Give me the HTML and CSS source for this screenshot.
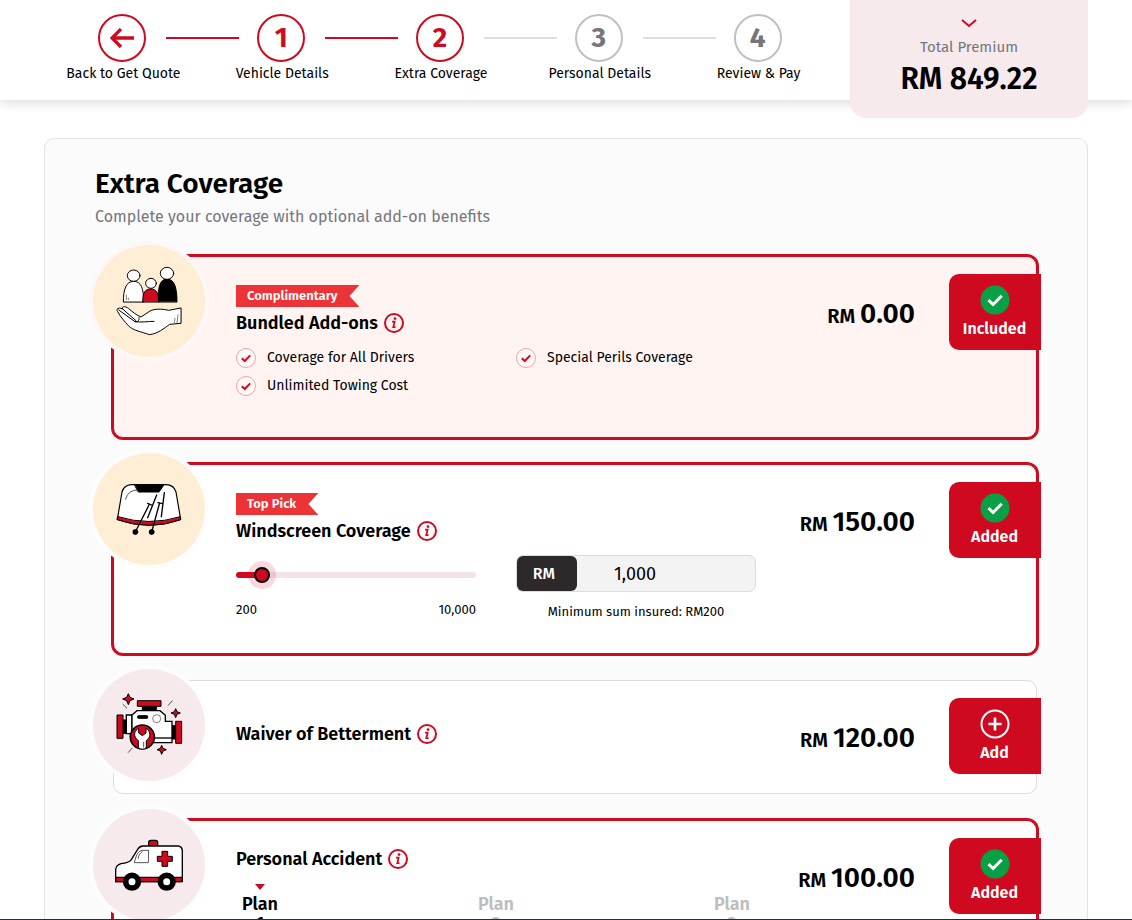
FILE: index.html
```html
<!DOCTYPE html>
<html lang="en">
<head>
    <meta charset="UTF-8">
    <meta name="viewport" content="width=device-width, initial-scale=1.0">
    <title>Extra Coverage</title>
    <link rel="stylesheet" href="styles.css">
</head>
<body>
    <!-- shared icons -->
    <svg class="sprite" aria-hidden="true">
        <symbol id="info" viewBox="0 0 20 20">
            <circle cx="10" cy="10" r="9" fill="none" stroke="#cf0a20" stroke-width="2"/>
            <circle cx="11" cy="5.6" r="1.4" fill="#cf0a20"/>
            <path d="M8 8.6h2.6L9.3 14.2h2.2" fill="none" stroke="#cf0a20" stroke-width="1.8"/>
        </symbol>
        <symbol id="tick" viewBox="0 0 20 20">
            <circle cx="10" cy="10" r="9.5" fill="#fff8f7" stroke="#f3a3a8"/>
            <path d="M5.8 10.2l3 2.8 5.4-5.6" fill="none" stroke="#cf0a20" stroke-width="2"/>
        </symbol>
        <symbol id="added" viewBox="0 0 30 30">
            <circle cx="15" cy="15" r="14.5" fill="#07a045"/>
            <path d="M8.5 15.2l4.6 4.3 8.6-8.8" fill="none" stroke="#fff" stroke-width="3"/>
        </symbol>
        <symbol id="plus" viewBox="0 0 30 30">
            <circle cx="15" cy="15" r="13.5" fill="none" stroke="#fff" stroke-width="2"/>
            <path d="M15 8.500v13M8.500 15h13" stroke="#fff" stroke-width="2.600"/>
        </symbol>
    </svg>

    <div class="page">
        <header class="top-bar">
            <ol class="steps">
                <li class="step done">
                    <a href="#">
                        <span class="step-line"><span class="step-circle">
                            <svg width="24" height="20" viewBox="0 0 24 20"><path d="M24 10H2M11 1L2 10l9 9" fill="none" stroke="#cf0a20" stroke-width="3.300"/></svg>
                        </span></span>
                        Back to Get Quote
                    </a>
                </li>
                <li class="step done"><span class="step-line"><span class="step-circle">1</span></span>Vehicle Details</li>
                <li class="step current"><span class="step-line"><span class="step-circle">2</span></span>Extra Coverage</li>
                <li class="step"><span class="step-line"><span class="step-circle">3</span></span>Personal Details</li>
                <li class="step"><span class="step-line"><span class="step-circle">4</span></span>Review &amp; Pay</li>
            </ol>
            <button class="premium" type="button">
                <svg width="18" height="10" viewBox="0 0 18 10"><path d="M2 2l7 6 7-6" fill="none" stroke="#cf0a20" stroke-width="2"/></svg>
                <span class="premium-label">Total Premium</span>
                <strong class="premium-total">RM 849.22</strong>
            </button>
        </header>

        <main class="panel">
            <h1>Extra Coverage</h1>
            <p class="intro">Complete your coverage with optional add-on benefits</p>

            <div class="cards">
                <section class="card selected tinted">
                    <div class="card-icon cream">
                        <svg viewBox="9 15 336 336" stroke="#000" stroke-width="3" stroke-linejoin="round" stroke-linecap="round">
                            <path d="M100 185c0-36 8-61 31-61s30 22 30 61z" fill="#fff"/>
                            <path d="M204 185c0-40 4-68 27-68s30 28 30 68z" fill="#000"/>
                            <path d="M158 185c0-26 7-38 24-38s24 12 24 38z" fill="#cf0a20"/>
                            <ellipse cx="131" cy="107" rx="19" ry="17" fill="#fff"/>
                            <ellipse cx="231" cy="100" rx="20" ry="18" fill="#fff"/>
                            <ellipse cx="183" cy="130" rx="16" ry="15" fill="#fff"/>
                            <path d="M109 165v14M115 174v5" stroke-width="1.500"/>
                            <path d="M272 204l-36 7c-22-5-42-5-56 2l-27 18c-12-4-27-17-38-26-12-9-22-4-17 2-10-6-22-1-15 8 9 17 20 28 32 42 16 16 40 18 63 27 26-3 44-19 61-31l33-3z" fill="#fff"/>
                            <path d="M98 207l40 35M86 210l49 35c10 2 13-4 12-12M135 245c20 3 38-1 57-1" fill="none"/>
                            <path d="M264 224l-3 25M255 235l-2 12" stroke-width="1.500"/>
                        </svg>
                    </div>
                    <div class="card-body">
                        <span class="ribbon">Complimentary</span>
                        <h2>Bundled Add-ons <svg class="info"><use href="#info"/></svg></h2>
                        <ul class="benefits">
                            <li><svg><use href="#tick"/></svg>Coverage for All Drivers</li>
                            <li><svg><use href="#tick"/></svg>Special Perils Coverage</li>
                            <li><svg><use href="#tick"/></svg>Unlimited Towing Cost</li>
                        </ul>
                    </div>
                    <p class="price"><small>RM</small> 0.00</p>
                    <button class="toggle" type="button"><svg><use href="#added"/></svg>Included</button>
                </section>

                <section class="card selected">
                    <div class="card-icon cream">
                        <svg viewBox="39 39 336 336" stroke="#000" stroke-linejoin="round" stroke-linecap="round">
                            <path d="M112 238l14-82q5-19 26-22h106q24 1 30 22l14 82q-95 34-190 0z" fill="#fff" stroke-width="3.500"/>
                            <path d="M114 230q93 29 187 0l1 9q-95 34-190 0z" fill="#cf0a20" stroke-width="3"/>
                            <path d="M165 136h86l-14 20h-61z" stroke-width="3"/>
                            <path d="M137 178c4-17 15-27 34-28" fill="none" stroke-width="2"/>
                            <path d="M166 276l41-81M230 165l-27 68M203 190l12 5M215 276l23-84M253 158l-9 72M234 188l13 3" fill="none" stroke-width="4"/>
                            <circle cx="166" cy="276" r="8"/>
                            <circle cx="215" cy="276" r="8"/>
                        </svg>
                    </div>
                    <div class="card-body">
                        <span class="ribbon">Top Pick</span>
                        <h2>Windscreen Coverage <svg class="info"><use href="#info"/></svg></h2>
                        <div class="sum">
                            <div class="slider">
                                <input type="range" min="200" max="10000" step="100" value="1000" aria-label="Sum insured" style="--fill: 11%">
                                <div class="slider-ends"><span>200</span><span>10,000</span></div>
                            </div>
                            <div class="amount">
                                <div class="amount-box">
                                    <label for="sum">RM</label>
                                    <input id="sum" type="text" value="1,000">
                                </div>
                                <p>Minimum sum insured: RM200</p>
                            </div>
                        </div>
                    </div>
                    <p class="price"><small>RM</small> 150.00</p>
                    <button class="toggle" type="button"><svg><use href="#added"/></svg>Added</button>
                </section>

                <section class="card single">
                    <div class="card-icon">
                        <svg viewBox="9 12 336 336" stroke="#000" stroke-width="3">
                            <path d="M157 124h42v16h-42zM98 165h13v40H98zM245 182h12v40h-12z" fill="#000"/>
                            <path d="M142 107h71v17h-71zM81 150h18v70H81zM257 169h18v66h-18z" fill="#cf0a20"/>
                            <path d="M109 150h17v56h-17z" fill="#fff" stroke-width="4"/>
                            <path d="M126 150l15-13h69l16 14v18h20v64H141l-15-24z" fill="#fff" stroke-width="4"/>
                            <path d="M190 219h56" stroke-width="4"/>
                            <rect x="143" y="152" width="30" height="8" rx="2"/>
                            <circle cx="200" cy="161" r="12" fill="#fff" stroke-width="1.500"/>
                            <circle cx="157" cy="216" r="36" fill="#cf0a20" stroke-width="5"/>
                            <path d="M146 190v14l11 8 11-8v-14c11 6 15 19 8 30l-7 7v21c-7 6-17 6-24 0v-21l-7-7c-8-11-4-24 8-30z" fill="#fff"/>
                            <path d="M161 231v16M98 117l13 13M247 107l-13 15M127 249l-13 14" stroke-width="2"/>
                            <path d="M115 86l5 11 12 5-12 5-5 12-5-12-12-5 12-5zM257 131l4 9 10 4-10 4-4 10-4-10-10-4 10-4zM215 241l4 9 10 4-10 4-4 10-4-10-10-4 10-4z" fill="#cf0a20"/>
                        </svg>
                    </div>
                    <div class="card-body">
                        <h2>Waiver of Betterment <svg class="info"><use href="#info"/></svg></h2>
                    </div>
                    <p class="price"><small>RM</small> 120.00</p>
                    <button class="toggle" type="button"><svg><use href="#plus"/></svg>Add</button>
                </section>

                <section class="card selected">
                    <div class="card-icon">
                        <svg viewBox="9 27 336 336" stroke="#000" stroke-width="4" stroke-linejoin="round">
                            <path d="M176 138v-11q0-6 7-6h13q7 0 7 6v11z" fill="#cf0a20"/>
                            <path d="M77 245v-36q1-13 16-18 24-2 31-12l19-31q5-9 16-10h105q12 1 13 14v93z" fill="#fff"/>
                            <path d="M77 232h200v8q-1 5-6 5H77z" fill="#cf0a20"/>
                            <path d="M133 188c5-20 10-35 24-37h19l-1 37z" fill="#fff" stroke-width="2"/>
                            <path d="M144 176c2-10 6-17 14-22" fill="none" stroke-width="2"/>
                            <path d="M216 154h17v15h14v15h-14v15h-17v-15h-14v-15h14z" fill="#cf0a20" stroke-width="3"/>
                            <circle cx="126" cy="245" r="19" fill="#fff" stroke-width="17"/>
                            <circle cx="230" cy="245" r="19" fill="#fff" stroke-width="17"/>
                        </svg>
                    </div>
                    <div class="card-body">
                        <h2>Personal Accident <svg class="info"><use href="#info"/></svg></h2>
                        <ul class="plans">
                            <li class="active">Plan<br>1</li>
                            <li>Plan<br>2</li>
                            <li>Plan<br>3</li>
                        </ul>
                    </div>
                    <p class="price"><small>RM</small> 100.00</p>
                    <button class="toggle" type="button"><svg><use href="#added"/></svg>Added</button>
                </section>
            </div>
        </main>
        <div class="bottom-bar"></div>
    </div>
</body>
</html>
```
FILE: styles.css
```css
* {
    box-sizing: border-box;
}
body {
    margin: 0;
    font-family: 'Fira Sans', 'Noto Sans', sans-serif;
    font-size: 14px;
    color: #000;
    background-color: #fff;
}
h1, h2, p, ul, ol {
    margin: 0;
    padding: 0;
}
ul, ol {
    list-style: none;
}
button, input {
    font-family: inherit;
}
.sprite {
    display: none;
}
.page {
    height: 100vh;
    overflow: hidden;
}

/* header */
.top-bar {
    display: flex;
    align-items: flex-start;
    gap: 12px;
    height: 100px;
    padding: 0 44px;
    background-color: #fff;
    box-shadow: 0 3px 10px rgba(0, 0, 0, 0.14);
}
.steps {
    flex: 1;
    display: flex;
    padding-top: 14px;
}
.step {
    flex: 1;
    font-size: 14px;
    line-height: 24px;
    text-align: center;
    white-space: nowrap;
}
.step a {
    color: inherit;
    text-decoration: none;
}
.step-line {
    display: flex;
    align-items: center;
}
/* each half of a connector belongs to the step on its side */
.step-line::before,
.step-line::after {
    content: '';
    flex: 1;
    height: 2px;
    background-color: #dedede;
}
.step-line::before {
    margin-right: 18px;
}
.step-line::after {
    margin-left: 20px;
}
.done .step-line::before,
.done .step-line::after,
.current .step-line::before {
    background-color: #cf0a20;
}
.step:first-child .step-line::before,
.step:last-child .step-line::after {
    background-color: transparent;
}
.step-circle {
    display: flex;
    align-items: center;
    justify-content: center;
    width: 48px;
    height: 48px;
    border: 2px solid #bfc0c2;
    border-radius: 50%;
    font-size: 28px;
    font-weight: 700;
    color: #75767b;
}
.done .step-circle,
.current .step-circle {
    border-color: #cf0a20;
    color: #cf0a20;
}
.premium {
    display: flex;
    flex-direction: column;
    align-items: center;
    width: 238px;
    height: 118px;
    padding: 18px 0 0;
    border: none;
    border-radius: 0 0 16px 16px;
    background-color: #f6eaec;
    color: #000;
    cursor: pointer;
}
.premium-label {
    margin-top: 8px;
    font-size: 15px;
    line-height: 22px;
    color: #75767b;
}
.premium-total {
    font-size: 30px;
    font-weight: 600;
    line-height: 42px;
}

/* panel */
.panel {
    margin: 38px 44px;
    padding: 28px 50px;
    border: 1px solid #e3e3e3;
    border-radius: 10px;
    background-color: #fbfbfb;
}
h1 {
    font-size: 28px;
    font-weight: 600;
    line-height: 34px;
}
.intro {
    margin-top: 4px;
    font-size: 16px;
    line-height: 24px;
    color: #75767b;
}
.cards {
    display: flex;
    flex-direction: column;
    gap: 26px;
    margin: 27px 0 0 18px;
}
.card {
    position: relative;
    display: flex;
    align-items: flex-start;
    padding: 0 0 31px 122px;
    border: 1px solid #dcdcdc;
    border-radius: 10px;
    background-color: #fff;
}
.card.selected {
    border-color: #cf0a20;
    box-shadow: 0 0 0 2px #cf0a20;
}
.card.tinted {
    background-color: #fff4f2;
}
.card.single {
    padding-bottom: 19px;
}
.card-icon {
    position: absolute;
    top: -12px;
    left: -21px;
    width: 112px;
    height: 112px;
    border-radius: 50%;
    background-color: #f6eaec;
    box-shadow: 0 0 0 4px #fdfdfd;
}
.card-icon.cream {
    background-color: #ffeed6;
}
.tinted .card-icon {
    box-shadow: 0 0 0 4px #fdf8f7;
}
.card-icon svg {
    display: block;
}
.card-body {
    flex: 1;
    padding-top: 28px;
}
.single .card-body {
    padding-top: 37px;
}
.ribbon {
    display: block;
    width: fit-content;
    padding: 0 22px 0 11px;
    background-color: #ec3438;
    clip-path: polygon(0 0, 100% 0, calc(100% - 10px) 50%, 100% 100%, 0 100%);
    color: #fff;
    font-size: 13px;
    font-weight: 600;
    line-height: 22px;
}
h2 {
    display: flex;
    align-items: center;
    gap: 6px;
    font-size: 18px;
    font-weight: 600;
    line-height: 32px;
    white-space: nowrap;
}
.info {
    width: 20px;
    height: 20px;
}
.benefits {
    display: grid;
    grid-template-columns: 240px 240px;
    column-gap: 40px;
    margin: 5px 0 6px;
    font-size: 14px;
    line-height: 28px;
}
.benefits li {
    display: flex;
    align-items: center;
    gap: 11px;
}
.benefits svg {
    width: 20px;
    height: 20px;
}
.price {
    padding-top: 38px;
    font-size: 28px;
    font-weight: 600;
    line-height: 38px;
    white-space: nowrap;
}
.price small {
    margin-right: -2px;
    font-size: 20px;
}
.toggle {
    display: flex;
    flex-direction: column;
    align-items: center;
    width: 92px;
    height: 76px;
    margin: 17px -5px 0 34px;
    padding: 11px 1px 0 0;
    border: none;
    border-radius: 10px 0 0 10px;
    background-color: #cf0a20;
    color: #fff;
    font-size: 16px;
    font-weight: 600;
    line-height: 28px;
    cursor: pointer;
}
.toggle svg {
    width: 30px;
    height: 30px;
}

/* sum insured */
.sum {
    display: grid;
    grid-template-columns: 240px 240px;
    column-gap: 40px;
    margin-top: 8px;
    font-size: 13px;
    line-height: 20px;
}
.slider input {
    display: block;
    appearance: none;
    width: 100%;
    height: 6px;
    margin: 17px 0 22px;
    border-radius: 3px;
    background: linear-gradient(to right, #cf0a20 var(--fill), #f2e3e6 var(--fill));
}
.slider input::-webkit-slider-thumb {
    appearance: none;
    width: 16px;
    height: 16px;
    border: 2px solid #000;
    border-radius: 50%;
    background-color: #cf0a20;
    box-shadow: 0 0 0 6px rgba(207, 10, 32, 0.15);
}
.slider-ends {
    display: flex;
    justify-content: space-between;
}
.amount {
    text-align: center;
}
.amount-box {
    display: flex;
    height: 37px;
    margin-bottom: 10px;
    border: 1px solid #dcdcdc;
    border-radius: 7px;
    background-color: #f3f3f3;
    font-size: 18px;
    line-height: 36px;
}
.amount-box label {
    width: 60px;
    padding-right: 6px;
    border-radius: 6px;
    background-color: #2d292a;
    color: #fff;
    font-size: 16px;
    font-weight: 500;
}
.amount-box input {
    flex: 1;
    min-width: 0;
    padding: 0 0 0 37px;
    border: none;
    background: none;
    font-size: 18px;
}

/* plans */
.selected .card-body:has(.plans) {
    padding-top: 22px;
}
.plans {
    display: flex;
    gap: 188px;
    padding-top: 19px;
    color: #bdbdbd;
    font-size: 18px;
    font-weight: 600;
    line-height: 20px;
}
.plans li {
    width: 48px;
    text-align: center;
}
.plans .active {
    margin-top: -10px;
    color: #000;
}
.plans .active::before {
    content: '';
    display: block;
    width: 10px;
    height: 6px;
    margin: 0 auto 4px;
    background-color: #cf0a20;
    clip-path: polygon(0 0, 100% 0, 50% 100%);
}

.bottom-bar {
    position: fixed;
    right: 0;
    bottom: 0;
    left: 0;
    height: 1px;
    background-color: #24303f;
}
```
